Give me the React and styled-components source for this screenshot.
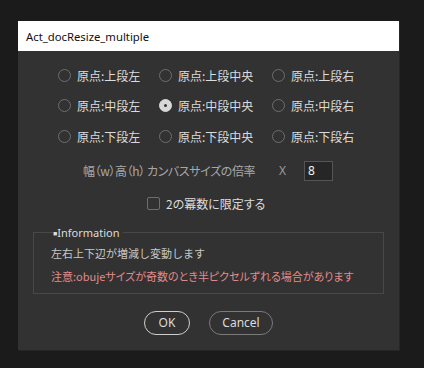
import React, { useState } from 'react';
import styled, { createGlobalStyle } from 'styled-components';

const GlobalStyle = createGlobalStyle`
  html, body {
    margin: 0;
    padding: 0;
    background: #1b1b1b;
  }
  body {
    font-family: "Noto Sans", "Noto Sans CJK JP", sans-serif;
  }
`;

const Page = styled.div`
  width: 424px;
  height: 368px;
  padding: 21px 0 0 18px;
  box-sizing: border-box;
`;

const Dialog = styled.div`
  width: 381px;
  background: #323232;
  box-shadow: 1px 1px 0 #262626;
`;

const TitleBar = styled.div`
  height: 30px;
  background: #ffffff;
  color: #111;
  font-family: "Noto Sans", sans-serif;
  font-size: 11.3px;
  display: flex;
  align-items: center;
  padding-left: 8px;
`;

const Body = styled.div`
  display: flex;
  flex-direction: column;
  padding: 9px 0 15px;
  font-family: "Noto Sans CJK JP", sans-serif;
  font-size: 12px;
  font-feature-settings: "palt";
  color: #dcdcdc;
`;

const RadioGrid = styled.div`
  display: grid;
  grid-template-columns: 101px 113px auto;
  grid-auto-rows: 30.5px;
  padding-left: 40px;
`;

const RadioLabel = styled.label`
  display: flex;
  align-items: center;
  gap: 6px;
  cursor: pointer;
  white-space: nowrap;
`;

const RadioCircle = styled.span`
  width: 11px;
  height: 11px;
  border-radius: 50%;
  border: 1px solid ${(p) => (p.$checked ? '#d8d8d8' : '#6e6e6e')};
  background: ${(p) => (p.$checked ? '#d8d8d8' : 'transparent')};
  display: flex;
  align-items: center;
  justify-content: center;
  flex-shrink: 0;
  &::after {
    content: '';
    width: 3px;
    height: 3px;
    border-radius: 50%;
    background: ${(p) => (p.$checked ? '#333' : 'transparent')};
  }
`;

const ScaleRow = styled.div`
  display: flex;
  align-items: center;
  height: 20px;
  margin-top: 9px;
  padding-left: 65px;
  color: #a8a8a8;
`;

const ScaleLabel = styled.span`
  width: 196px;
  white-space: nowrap;
  letter-spacing: -0.4px;
`;

const Times = styled.span`
  width: 25px;
  font-family: "Noto Sans", sans-serif;
  color: #9a9a9a;
`;

const NumberInput = styled.input`
  width: 29px;
  height: 20px;
  box-sizing: border-box;
  background: #262626;
  border: 1px solid #555;
  color: #f0f0f0;
  font-family: "Noto Sans", sans-serif;
  font-size: 12px;
  padding: 0 0 0 3px;
  outline: none;
`;

const CheckRow = styled.label`
  display: flex;
  align-items: center;
  gap: 6px;
  margin-top: 15px;
  padding-left: 129px;
  height: 16px;
  cursor: pointer;
`;

const CheckBox = styled.span`
  width: 11px;
  height: 11px;
  border: 1px solid #6e6e6e;
  border-radius: 2px;
`;

const InfoBox = styled.fieldset`
  min-width: 0;
  margin: 13px 15px 0;
  padding: 5px 0 9px 17px;
  border: 1px solid #484848;
  display: flex;
  flex-direction: column;
  gap: 7px;
  font-size: 11px;
`;

const Legend = styled.legend`
  padding: 0 4px 0 0;
  margin-left: 2px;
  font-family: "Noto Sans", sans-serif;
  font-size: 11px;
  color: #dcdcdc;
`;

const LegendMark = styled.span`
  font-size: 7px;
  vertical-align: 1px;
`;

const InfoText = styled.div`
  color: ${(p) => (p.$warn ? '#e08c8c' : '#c8c8c8')};
  font-feature-settings: ${(p) => (p.$warn ? '"palt"' : 'normal')};
  line-height: 16px;
  white-space: nowrap;
`;

const Buttons = styled.div`
  display: flex;
  justify-content: center;
  gap: 19px;
  margin-top: 17px;
`;

const Button = styled.button`
  width: ${(p) => p.$w}px;
  height: 24px;
  border-radius: 12px;
  background: transparent;
  border: 1px solid ${(p) => (p.$primary ? '#cfcfcf' : '#7a7a7a')};
  color: #dcdcdc;
  font-family: "Noto Sans", sans-serif;
  font-size: 12px;
  padding: 0;
  cursor: pointer;
`;

const positions = [
  '上段左', '上段中央', '上段右',
  '中段左', '中段中央', '中段右',
  '下段左', '下段中央', '下段右',
];

export default function App() {
  const [origin, setOrigin] = useState(4);
  const [scale, setScale] = useState('8');

  return (
    <Page>
      <GlobalStyle />
      <Dialog>
        <TitleBar>Act_docResize_multiple</TitleBar>
        <Body>
          <RadioGrid>
            {positions.map((p, i) => (
              <RadioLabel key={p} onClick={() => setOrigin(i)}>
                <RadioCircle $checked={origin === i} />
                原点:{p}
              </RadioLabel>
            ))}
          </RadioGrid>

          <ScaleRow>
            <ScaleLabel>幅（w）高（h）&nbsp;カンバスサイズの倍率</ScaleLabel>
            <Times>X</Times>
            <NumberInput value={scale} onChange={(e) => setScale(e.target.value)} />
          </ScaleRow>

          <CheckRow>
            <CheckBox />
            2の冪数に限定する
          </CheckRow>

          <InfoBox>
            <Legend><LegendMark>■</LegendMark>Information</Legend>
            <InfoText>左右上下辺が増減し変動します</InfoText>
            <InfoText $warn>注意:obujeサイズが奇数のとき半ピクセルずれる場合があります</InfoText>
          </InfoBox>

          <Buttons>
            <Button $primary $w={46}>OK</Button>
            <Button $w={64}>Cancel</Button>
          </Buttons>
        </Body>
      </Dialog>
    </Page>
  );
}
